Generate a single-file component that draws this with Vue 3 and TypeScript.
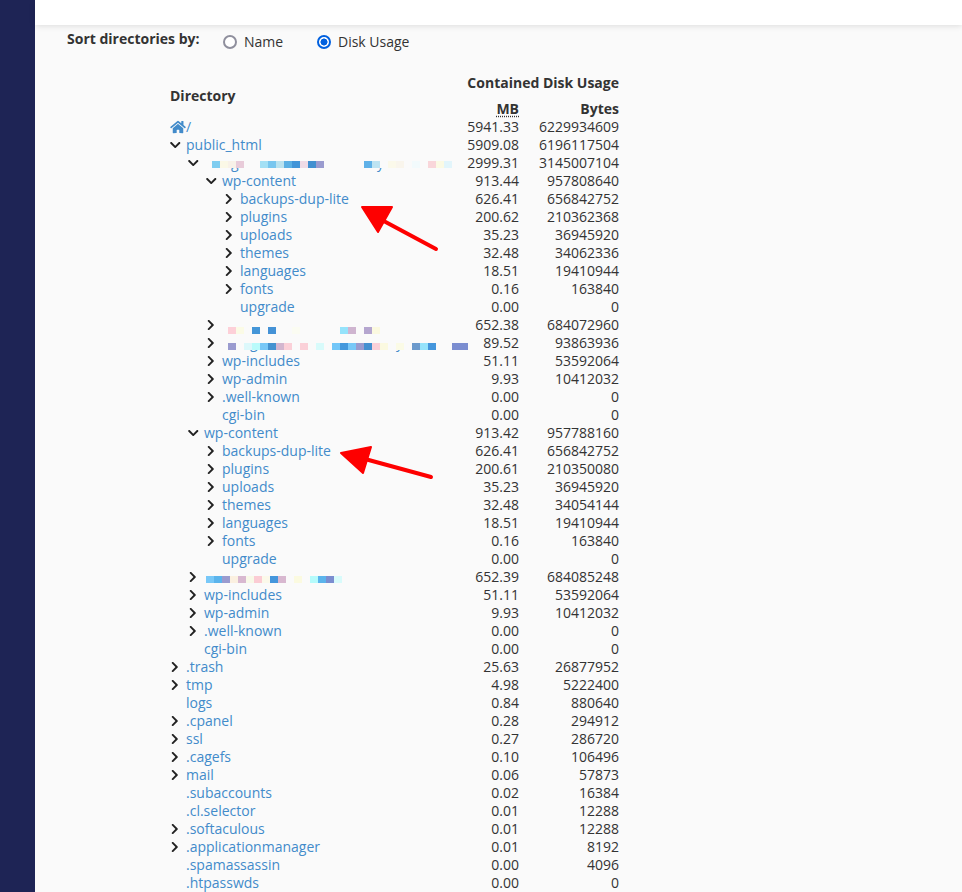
<script setup lang="ts">
import { computed } from 'vue'

type Kind = 'home' | 'open' | 'closed' | 'leaf'

interface Redaction {
  left: number
  top: number
  blocks: (string | null)[]
  tails?: { char: string; left: number }[]
}

interface DirRow {
  level: number
  kind: Kind
  name?: string
  mb: string
  bytes: string
  redaction?: Redaction
}

const raw: DirRow[] = [
  { level: 0, kind: 'home', name: '/', mb: '5941.33', bytes: '6229934609' },
  { level: 0, kind: 'open', name: 'public_html', mb: '5909.08', bytes: '6196117504' },
  {
    level: 1, kind: 'open', mb: '2999.31', bytes: '3145007104',
    redaction: {
      left: 42, top: 7,
      blocks: ['#7fcdf0', '#fbf8e6', '#f8f1e8', '#e8cbd9', null, null, '#a3e0f5', '#78c6ef', '#b9e2ef', '#5bb0e4', '#4295d8', '#efdbe6', '#4290d0', '#9a9bcf', null, null, null, null, null, '#5fb1e8', '#bde3f2', null, '#fbf9ea', '#f9f5ec', null, '#f2fafc', null, '#f9d6da', '#fbfae4', '#e2f5fb'],
      tails: [{ char: 'g', left: 61 }, { char: 'y', left: 207 }],
    },
  },
  { level: 2, kind: 'open', name: 'wp-content', mb: '913.44', bytes: '957808640' },
  { level: 3, kind: 'closed', name: 'backups-dup-lite', mb: '626.41', bytes: '656842752' },
  { level: 3, kind: 'closed', name: 'plugins', mb: '200.62', bytes: '210362368' },
  { level: 3, kind: 'closed', name: 'uploads', mb: '35.23', bytes: '36945920' },
  { level: 3, kind: 'closed', name: 'themes', mb: '32.48', bytes: '34062336' },
  { level: 3, kind: 'closed', name: 'languages', mb: '18.51', bytes: '19410944' },
  { level: 3, kind: 'closed', name: 'fonts', mb: '0.16', bytes: '163840' },
  { level: 3, kind: 'leaf', name: 'upgrade', mb: '0.00', bytes: '0' },
  {
    level: 2, kind: 'closed', mb: '652.38', bytes: '684072960',
    redaction: {
      left: 58, top: 11,
      blocks: ['#fdd0d8', '#fbfbe6', null, '#4496d8', null, '#4492d6', null, null, '#fbfcf2', null, null, null, null, null, '#95e3fb', '#cfb5d0', null, '#b5a6cf', '#fbf9e0'],
    },
  },
  {
    level: 2, kind: 'closed', mb: '89.52', bytes: '93863936',
    redaction: {
      left: 58, top: 9,
      blocks: ['#9a9bcf', null, '#dcf8fb', '#b9fbfb', '#78c8f7', '#4492d0', '#d3b6cf', '#fbd0d8', null, '#fbd0d8', null, '#d8fbfb', null, '#72c6f8', '#4498dc', '#78c8f8', '#9a9bcf', '#4490d0', '#fbd0d8', '#fbf9e0', null, '#fbfbe6', null, '#6c9acc', '#95e3fb', '#4496dc', null, null, '#7b8dd0', '#7b8dd0'],
      tails: [{ char: 'g', left: 80 }, { char: 'y', left: 226 }],
    },
  },
  { level: 2, kind: 'closed', name: 'wp-includes', mb: '51.11', bytes: '53592064' },
  { level: 2, kind: 'closed', name: 'wp-admin', mb: '9.93', bytes: '10412032' },
  { level: 2, kind: 'closed', name: '.well-known', mb: '0.00', bytes: '0' },
  { level: 2, kind: 'leaf', name: 'cgi-bin', mb: '0.00', bytes: '0' },
  { level: 1, kind: 'open', name: 'wp-content', mb: '913.42', bytes: '957788160' },
  { level: 2, kind: 'closed', name: 'backups-dup-lite', mb: '626.41', bytes: '656842752' },
  { level: 2, kind: 'closed', name: 'plugins', mb: '200.61', bytes: '210350080' },
  { level: 2, kind: 'closed', name: 'uploads', mb: '35.23', bytes: '36945920' },
  { level: 2, kind: 'closed', name: 'themes', mb: '32.48', bytes: '34054144' },
  { level: 2, kind: 'closed', name: 'languages', mb: '18.51', bytes: '19410944' },
  { level: 2, kind: 'closed', name: 'fonts', mb: '0.16', bytes: '163840' },
  { level: 2, kind: 'leaf', name: 'upgrade', mb: '0.00', bytes: '0' },
  {
    level: 1, kind: 'closed', mb: '652.39', bytes: '684085248',
    redaction: {
      left: 36, top: 8,
      blocks: ['#78c8f8', '#5bb4ec', '#9a9bcf', '#fbf0e0', '#d8b8d0', '#f8f9e8', '#fbccd4', '#fbf9ea', '#4496dc', '#d8b8d0', null, '#fbfae0', null, '#b5fbfb', '#5bb4ec', '#7b8dd0', '#d8fbfb'],
    },
  },
  { level: 1, kind: 'closed', name: 'wp-includes', mb: '51.11', bytes: '53592064' },
  { level: 1, kind: 'closed', name: 'wp-admin', mb: '9.93', bytes: '10412032' },
  { level: 1, kind: 'closed', name: '.well-known', mb: '0.00', bytes: '0' },
  { level: 1, kind: 'leaf', name: 'cgi-bin', mb: '0.00', bytes: '0' },
  { level: 0, kind: 'closed', name: '.trash', mb: '25.63', bytes: '26877952' },
  { level: 0, kind: 'closed', name: 'tmp', mb: '4.98', bytes: '5222400' },
  { level: 0, kind: 'leaf', name: 'logs', mb: '0.84', bytes: '880640' },
  { level: 0, kind: 'closed', name: '.cpanel', mb: '0.28', bytes: '294912' },
  { level: 0, kind: 'closed', name: 'ssl', mb: '0.27', bytes: '286720' },
  { level: 0, kind: 'closed', name: '.cagefs', mb: '0.10', bytes: '106496' },
  { level: 0, kind: 'closed', name: 'mail', mb: '0.06', bytes: '57873' },
  { level: 0, kind: 'leaf', name: '.subaccounts', mb: '0.02', bytes: '16384' },
  { level: 0, kind: 'leaf', name: '.cl.selector', mb: '0.01', bytes: '12288' },
  { level: 0, kind: 'closed', name: '.softaculous', mb: '0.01', bytes: '12288' },
  { level: 0, kind: 'closed', name: '.applicationmanager', mb: '0.01', bytes: '8192' },
  { level: 0, kind: 'leaf', name: '.spamassassin', mb: '0.00', bytes: '4096' },
  { level: 0, kind: 'leaf', name: '.htpasswds', mb: '0.00', bytes: '0' },
]

// 18px per tree level
const rows = computed(() => raw.map(r => ({ ...r, indent: `${r.level * 18}px` })))
</script>

<template>
  <div class="page">
    <aside class="sidebar" />
    <main class="main">
      <div class="topbar" />

      <div class="sort">
        <span class="sort__label">Sort directories by:</span>
        <label class="sort__option">
          <input type="radio" name="sort" value="name">
          Name
        </label>
        <label class="sort__option">
          <input type="radio" name="sort" value="disk" checked>
          Disk Usage
        </label>
      </div>

      <table class="usage">
        <colgroup>
          <col class="usage__dir">
          <col class="usage__mb">
          <col class="usage__bytes">
        </colgroup>
        <thead>
          <tr>
            <th rowspan="2" class="usage__head-dir">Directory</th>
            <th colspan="2" class="usage__head-group">Contained Disk Usage</th>
          </tr>
          <tr class="usage__units">
            <th><abbr title="Megabytes">MB</abbr></th>
            <th>Bytes</th>
          </tr>
        </thead>
        <tbody>
          <tr v-for="(row, idx) in rows" :key="idx">
            <td class="usage__name">
              <div class="tree-row" :style="{ paddingLeft: row.indent }">
                <svg v-if="row.kind === 'home'" class="icon-home" viewBox="0 0 576 512" aria-hidden="true">
                  <path d="M280.37 148.26L96 300.11V464a16 16 0 0 0 16 16l112.06-.29a16 16 0 0 0 15.92-16V368a16 16 0 0 1 16-16h64a16 16 0 0 1 16 16v95.64a16 16 0 0 0 16 16.05L464 480a16 16 0 0 0 16-16V300L295.67 148.26a12.19 12.19 0 0 0-15.3 0zM571.6 251.47L488 182.56V44.05a12 12 0 0 0-12-12h-56a12 12 0 0 0-12 12v72.61L318.47 43a48 48 0 0 0-61 0L4.34 251.47a12 12 0 0 0-1.6 16.9l25.5 31A12 12 0 0 0 45.15 301l235.22-193.74a12.19 12.19 0 0 1 15.3 0L530.9 301a12 12 0 0 0 16.9-1.6l25.5-31a12 12 0 0 0-1.7-16.93z" />
                </svg>
                <span v-else class="toggle">
                  <svg v-if="row.kind === 'open'" class="icon-down" viewBox="0 0 448 512" aria-hidden="true">
                    <path d="M207.029 381.476L12.686 187.132c-9.373-9.373-9.373-24.569 0-33.941l22.667-22.667c9.357-9.357 24.522-9.375 33.901-.04L224 284.505l154.745-154.021c9.379-9.335 24.544-9.317 33.901.04l22.667 22.667c9.373 9.373 9.373 24.569 0 33.941L240.971 381.476c-9.373 9.372-24.569 9.372-33.942 0z" />
                  </svg>
                  <svg v-else-if="row.kind === 'closed'" class="icon-right" viewBox="0 0 320 512" aria-hidden="true">
                    <path d="M285.476 272.971L91.132 467.314c-9.373 9.373-24.569 9.373-33.941 0l-22.667-22.667c-9.357-9.357-9.375-24.522-.04-33.901L188.505 256 34.484 101.255c-9.335-9.379-9.317-24.544.04-33.901l22.667-22.667c9.373-9.373 24.569-9.373 33.941 0L285.475 239.03c9.373 9.372 9.373 24.568.001 33.941z" />
                  </svg>
                </span>
                <a v-if="row.name" class="tree-row__link" href="#">{{ row.name }}</a>
              </div>

              <!-- Blurred-out folder names: only the descenders poke out -->
              <template v-if="row.redaction">
                <a
                  v-for="tail in row.redaction.tails"
                  :key="tail.left"
                  class="tail"
                  href="#"
                  :style="{ left: `${tail.left}px` }"
                >{{ tail.char }}</a>
                <div
                  class="mosaic"
                  :style="{ left: `${row.redaction.left}px`, top: `${row.redaction.top}px` }"
                >
                  <i
                    v-for="(color, i) in row.redaction.blocks"
                    :key="i"
                    :style="{ background: color ?? 'transparent' }"
                  />
                </div>
              </template>
            </td>
            <td class="usage__num">{{ row.mb }}</td>
            <td class="usage__num">{{ row.bytes }}</td>
          </tr>
        </tbody>
      </table>

      <!-- Red annotation arrows drawn over the screenshot -->
      <svg class="arrows" viewBox="0 0 927 892" aria-hidden="true">
        <g fill="#fe0000" stroke="#fe0000" stroke-linejoin="round">
          <path d="M327 207L357 207L343 232Z" stroke-width="2" />
          <path d="M345 219L401 249" stroke-width="4" stroke-linecap="round" fill="none" />
          <path d="M306 453L336 447L328 473Z" stroke-width="2" />
          <path d="M330 459L396 477" stroke-width="4" stroke-linecap="round" fill="none" />
        </g>
      </svg>
    </main>
  </div>
</template>

<style>
html,
body {
  margin: 0;
  height: 100%;
  overflow: hidden;
}
</style>

<style scoped>
.page {
  display: flex;
  height: 892px;
  overflow: hidden;
  font-family: "Open Sans", "Noto Sans", sans-serif;
  font-size: 14px;
  line-height: 18px;
  color: #333;
  background: #fafafa;
}

.sidebar {
  flex: 0 0 35px;
  background: #1e2455;
}

.main {
  position: relative;
  flex: 1;
  min-width: 0;
}

.topbar {
  height: 25px;
  background: #fff;
  box-shadow: 0 1px 6px rgba(0, 0, 0, 0.12);
}

/* ── Sort options ─────────────────────────────── */
.sort {
  display: flex;
  align-items: flex-start;
  padding: 5px 0 0 32px;
}

.sort__label {
  width: 156px;
  font-weight: 700;
}

.sort__option {
  display: flex;
  align-items: center;
  gap: 7px;
  width: 94px;
  padding-top: 3px;
}

.sort__option input {
  appearance: none;
  box-sizing: border-box;
  flex: none;
  width: 14px;
  height: 14px;
  margin: 0;
  border: 2px solid #8f8f9d;
  border-radius: 50%;
  background: #fff;
}

.sort__option input:checked {
  border-color: #0060df;
  background: radial-gradient(circle, #0060df 0, #0060df 3.2px, #fff 3.8px);
}

/* ── Table ────────────────────────────────────── */
.usage {
  table-layout: fixed;
  width: 449px;
  margin: 23px 0 0 135px;
  border-collapse: collapse;
}

.usage__dir {
  width: 297px;
}

.usage__mb {
  width: 52px;
}

.usage__bytes {
  width: 100px;
}

.usage th,
.usage td {
  padding: 0;
}

.usage th {
  font-weight: 700;
  text-align: right;
}

.usage .usage__head-dir {
  text-align: left;
}

.usage .usage__head-group {
  height: 18px;
  vertical-align: top;
}

.usage__units th {
  padding-top: 8px;
}

abbr {
  text-decoration: underline dotted;
  text-underline-offset: 2px;
}

.usage__name {
  position: relative;
  height: 18px;
}

.usage__num {
  text-align: right;
}

.tree-row {
  display: flex;
  align-items: center;
  height: 18px;
}

.tree-row__link,
.tail {
  color: #428bca;
  text-decoration: none;
}

.toggle {
  display: flex;
  align-items: center;
  flex: none;
  width: 16px;
  height: 18px;
  color: #222;
}

.icon-home {
  flex: none;
  width: 16px;
  height: 14px;
  fill: #428bca;
}

.icon-down {
  width: 10.5px;
  height: 12px;
  fill: currentColor;
}

.icon-right {
  width: 7.5px;
  height: 12px;
  margin-left: 0.5px;
  fill: currentColor;
}

.tail {
  position: absolute;
  top: 0;
}

.mosaic {
  position: absolute;
  display: flex;
  height: 7px;
  background: #fafafa;
  box-shadow: 0 -4px 0 #fafafa;
}

.mosaic i {
  flex: none;
  width: 8px;
  height: 100%;
}

.arrows {
  position: absolute;
  top: 0;
  left: 0;
  width: 927px;
  height: 892px;
  pointer-events: none;
}
</style>
